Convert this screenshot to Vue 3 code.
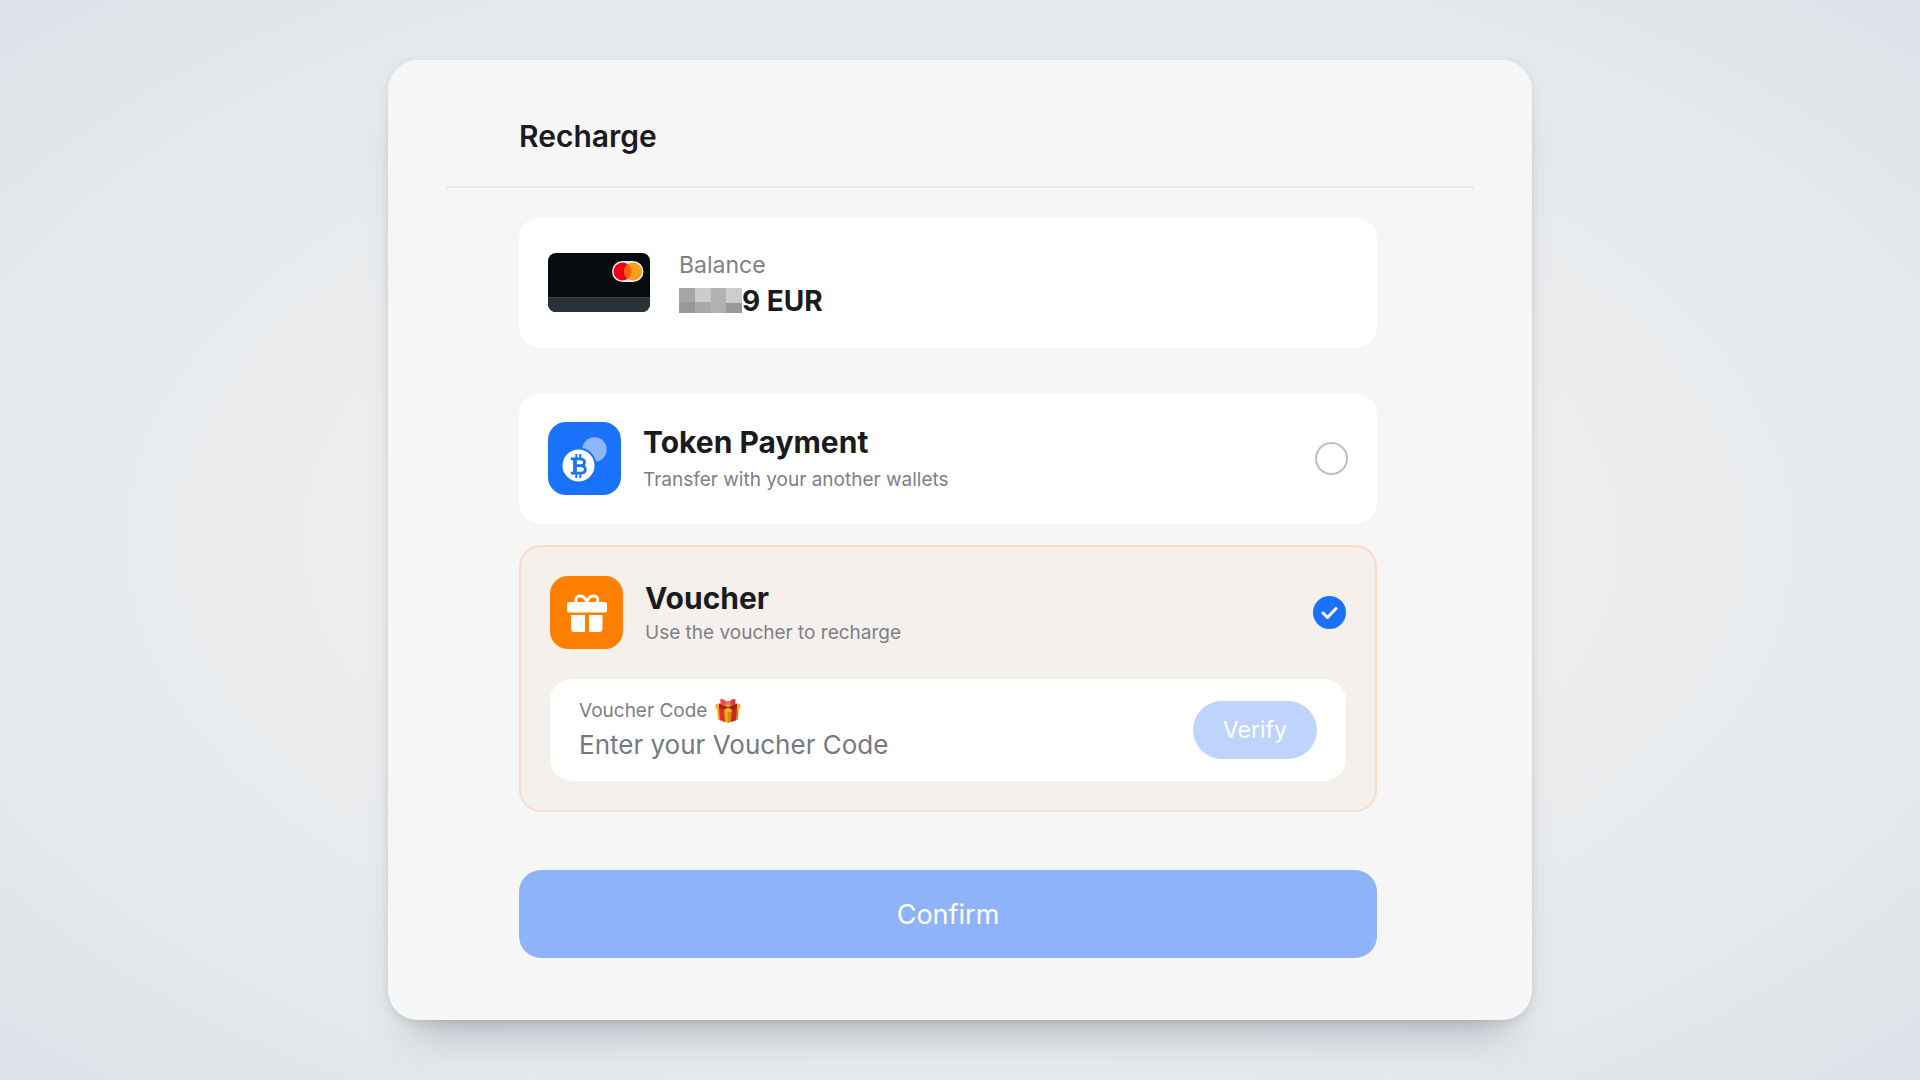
<script setup>
import { ref } from 'vue';

const method = ref('voucher');
const code = ref('');
</script>

<template>
    <main class="page">
        <form class="panel" @submit.prevent>
            <header class="panel-header">
                <h1>Recharge</h1>
            </header>

            <div class="content">
                <section class="box balance">
                    <svg class="bank-card" viewBox="0 0 102 59" aria-hidden="true">
                        <defs>
                            <clipPath id="card-shape">
                                <rect width="102" height="59" rx="8" />
                            </clipPath>
                        </defs>
                        <g clip-path="url(#card-shape)">
                            <rect width="102" height="59" fill="#060c10" />
                            <rect y="44" width="102" height="15" fill="#2b3138" />
                            <rect y="44" width="102" height="1" fill="#3b4047" />
                        </g>
                        <rect x="64" y="8" width="31.5" height="21" rx="10.5" fill="#f6ece4" />
                        <circle cx="74.5" cy="18.5" r="9" fill="#eb001b" />
                        <circle cx="85" cy="18.5" r="9" fill="#f79e1b" />
                        <path d="M79.75 11.2a9 9 0 0 1 0 14.6a9 9 0 0 1 0-14.6z" fill="#f95f08" />
                    </svg>
                    <div>
                        <p class="balance-label">Balance</p>
                        <p class="balance-value">
                            <svg class="mask" viewBox="0 0 63 25" aria-hidden="true" shape-rendering="crispEdges">
                                <rect width="63" height="25" fill="#b1b1b1" />
                                <rect width="16" height="14" fill="#a6a6a8" />
                                <rect x="16" width="16" height="14" fill="#cccccd" />
                                <rect x="47" width="16" height="15" fill="#cdcdcd" />
                                <rect y="14" width="16" height="11" fill="#98989b" />
                                <rect x="16" y="14" width="16" height="11" fill="#a9a9aa" />
                                <rect x="47" y="15" width="16" height="10" fill="#99999c" />
                            </svg>
                            <span>9 EUR</span>
                        </p>
                    </div>
                </section>

                <label class="box method token">
                    <svg class="method-icon" viewBox="0 0 73 73" aria-hidden="true">
                        <rect width="73" height="73" rx="18" fill="#1a72fa" />
                        <circle cx="46.5" cy="27.5" r="12.2" fill="#8cb6fd" />
                        <circle cx="30.5" cy="43.5" r="18" fill="#1a72fa" />
                        <circle cx="30.5" cy="43.5" r="16" fill="#fff" />
                        <g fill="none" stroke="#1a72fa">
                            <path d="M28.3 32v5M32.3 32v5M28.3 51v5M32.3 51v5" stroke-width="2" />
                            <path d="M22.8 36.8h9c3 0 4.7 1.3 4.7 3.5s-1.7 3.4-4.7 3.4h-4.5M31.8 43.7c3.7 0 5.5 1.3 5.5 3.7s-1.8 3.8-5.5 3.8h-9" stroke-width="2.8" />
                            <path d="M27 36.5v15" stroke-width="3.8" />
                        </g>
                    </svg>
                    <span class="method-text">
                        <span class="method-title">Token Payment</span>
                        <span class="method-hint">Transfer with your another wallets</span>
                    </span>
                    <span class="radio">
                        <input v-model="method" type="radio" name="method" value="token" />
                        <svg viewBox="0 0 33 33" aria-hidden="true">
                            <path d="M10 17l4.5 4.5L23 12.5" />
                        </svg>
                    </span>
                </label>

                <section class="box voucher">
                    <label class="method">
                        <svg class="method-icon" viewBox="0 0 73 73" aria-hidden="true">
                            <rect width="73" height="73" rx="18" fill="#ff7f00" />
                            <g fill="none" stroke="#fff" stroke-width="2.8">
                                <path d="M26.5 27c-2-4 0-7 3.5-7 3.5 0 6 3.5 7 7" />
                                <path d="M47 27c2-4 0-7-3.5-7-3.5 0-6 3.5-7 7" />
                            </g>
                            <rect x="17" y="26" width="40" height="10.5" rx="2" fill="#fff" />
                            <path d="M21 39h14v17H24.5a3.5 3.5 0 0 1-3.5-3.500z" fill="#fff" />
                            <path d="M39 39h13.500v13.500a3.500 3.500 0 0 1-3.500 3.500H39z" fill="#fff" />
                        </svg>
                        <span class="method-text">
                            <span class="method-title">Voucher</span>
                            <span class="method-hint">Use the voucher to recharge</span>
                        </span>
                        <span class="radio">
                            <input v-model="method" type="radio" name="method" value="voucher" />
                            <svg viewBox="0 0 33 33" aria-hidden="true">
                                <path d="M10 17l4.5 4.5L23 12.5" />
                            </svg>
                        </span>
                    </label>

                    <div class="code-box">
                        <div class="code-field">
                            <label class="code-label" for="voucher-code">
                                Voucher Code
                                <svg class="gift" viewBox="0 0 26 26" aria-hidden="true">
                                    <path d="M2 8l11 3.5V25L3.2 21.5z" fill="#e9a50f" />
                                    <path d="M24 8l-11 3.5V25l9.8-3.5z" fill="#d78d0b" />
                                    <path d="M.5 6.5L13 3l12.5 3.5v4L13 14.5.5 10.5z" fill="#f3b51b" />
                                    <path d="M4 9l5 1.5 1 13.5-5-1.8z" fill="#dc3420" />
                                    <path d="M22 9l-5 1.5-1 13.5 5-1.8z" fill="#c9271b" />
                                    <path d="M4 5.5L13 9l9-3.5v4.5l-5 1.7L13 9.5l-4 2.2-5-1.7z" fill="#9f2419" />
                                    <path d="M12.5 5.5C9.5 0 5 0 5.2 2.5L6 7c2.5.8 5 .2 6.5-1.5z" fill="#ef4a4e" />
                                    <path d="M13.5 5.5C16 0 20.5 0 20.5 2.5L20 7c-2.5.8-5 .2-6.5-1.5z" fill="#e4383e" />
                                    <rect x="11" y="3" width="4.5" height="4" rx="1.5" fill="#f7686a" />
                                </svg>
                            </label>
                            <input id="voucher-code" v-model="code" type="text" placeholder="Enter your Voucher Code" />
                        </div>
                        <button class="verify" type="button">Verify</button>
                    </div>
                </section>

                <button class="confirm" type="submit">Confirm</button>
            </div>
        </form>
    </main>
</template>

<style>
body {
    margin: 0;
}
</style>

<style scoped>
* {
    box-sizing: border-box;
}

.page {
    min-height: 100vh;
    padding: 60px 24px;
    font-family: Inter, "Liberation Sans", sans-serif;
    color: #1a1b1f;
    background: radial-gradient(ellipse at center, #eeeeef 35%, #e5e9ec 75%, #dee2e8 100%);
}

.panel {
    max-width: 1144px;
    margin: 0 auto;
    padding-bottom: 62px;
    background: #f6f6f7;
    border-radius: 30px;
    box-shadow: 0 34px 40px -24px rgba(60, 70, 85, 0.34), 0 3px 10px rgba(60, 70, 85, 0.12);
}

.panel-header {
    margin: 0 58px;
    padding: 56px 73px 30px;
    border-bottom: 2px solid #e8e8e9;
}

h1,
p {
    margin: 0;
}

h1 {
    font-size: 30px;
    font-weight: 600;
    line-height: 40px;
}

.content {
    display: flex;
    flex-direction: column;
    padding: 29px 155px 0 131px;
}

.box {
    background: #fff;
    border-radius: 22px;
}

.balance {
    display: flex;
    align-items: center;
    gap: 29px;
    min-height: 131px;
    padding: 29px;
}

.bank-card {
    width: 102px;
    height: 59px;
}

.balance-label {
    font-size: 23px;
    line-height: 36px;
    color: #7d8088;
}

.balance-value {
    display: flex;
    align-items: center;
    font-size: 28px;
    font-weight: 700;
    line-height: 36px;
}

.mask {
    width: 63px;
    height: 25px;
}

.method {
    display: flex;
    align-items: center;
    gap: 22px;
    cursor: pointer;
}

.token {
    margin-top: 45px;
    padding: 29px;
}

.method-icon {
    flex: none;
    width: 73px;
    height: 73px;
}

.method-text {
    display: flex;
    flex: 1;
    flex-direction: column;
}

.token .method-text {
    gap: 3px;
}

.method-title {
    font-size: 30px;
    font-weight: 700;
    line-height: 40px;
}

.method-hint {
    font-size: 19px;
    line-height: 30px;
    color: #7d8088;
}

.radio {
    display: grid;
    flex: none;
    width: 33px;
    height: 33px;
}

.radio input,
.radio svg {
    grid-area: 1 / 1;
    width: 33px;
    height: 33px;
    margin: 0;
}

.radio input {
    appearance: none;
    border: 2px solid #bdbec4;
    border-radius: 50%;
    cursor: pointer;
}

.radio input:checked {
    background: #1a72fa;
    border-color: #1a72fa;
}

.radio svg {
    visibility: hidden;
    fill: none;
    stroke: #fff;
    stroke-width: 3;
    stroke-linecap: round;
    stroke-linejoin: round;
    pointer-events: none;
}

.radio input:checked + svg {
    visibility: visible;
}

.voucher {
    margin-top: 21px;
    padding: 29px;
    background: #f5f0ec;
    border: 2px solid #f9dccb;
}

.code-box {
    display: flex;
    align-items: center;
    gap: 24px;
    margin-top: 30px;
    padding: 16px 29px;
    background: #fff;
    border-radius: 22px;
}

.code-field {
    flex: 1;
    min-width: 0;
    padding-bottom: 4px;
}

.code-label {
    display: flex;
    align-items: center;
    gap: 8px;
    font-size: 19px;
    line-height: 32px;
    color: #7d8088;
}

.gift {
    width: 26px;
    height: 26px;
}

.code-field input {
    display: block;
    width: 100%;
    height: 34px;
    padding: 0;
    font: inherit;
    font-size: 26px;
    color: #1a1b1f;
    background: none;
    border: 0;
    outline: 0;
}

.code-field input::placeholder {
    color: #757983;
    opacity: 1;
}

button {
    font: inherit;
    color: #fff;
    border: 0;
    cursor: pointer;
}

.verify {
    height: 58px;
    padding: 0 30px;
    font-size: 23px;
    background: #bfd4fd;
    border-radius: 29px;
}

.confirm {
    height: 88px;
    margin-top: 58px;
    font-size: 27px;
    background: #8fb3f9;
    border-radius: 22px;
}
</style>
